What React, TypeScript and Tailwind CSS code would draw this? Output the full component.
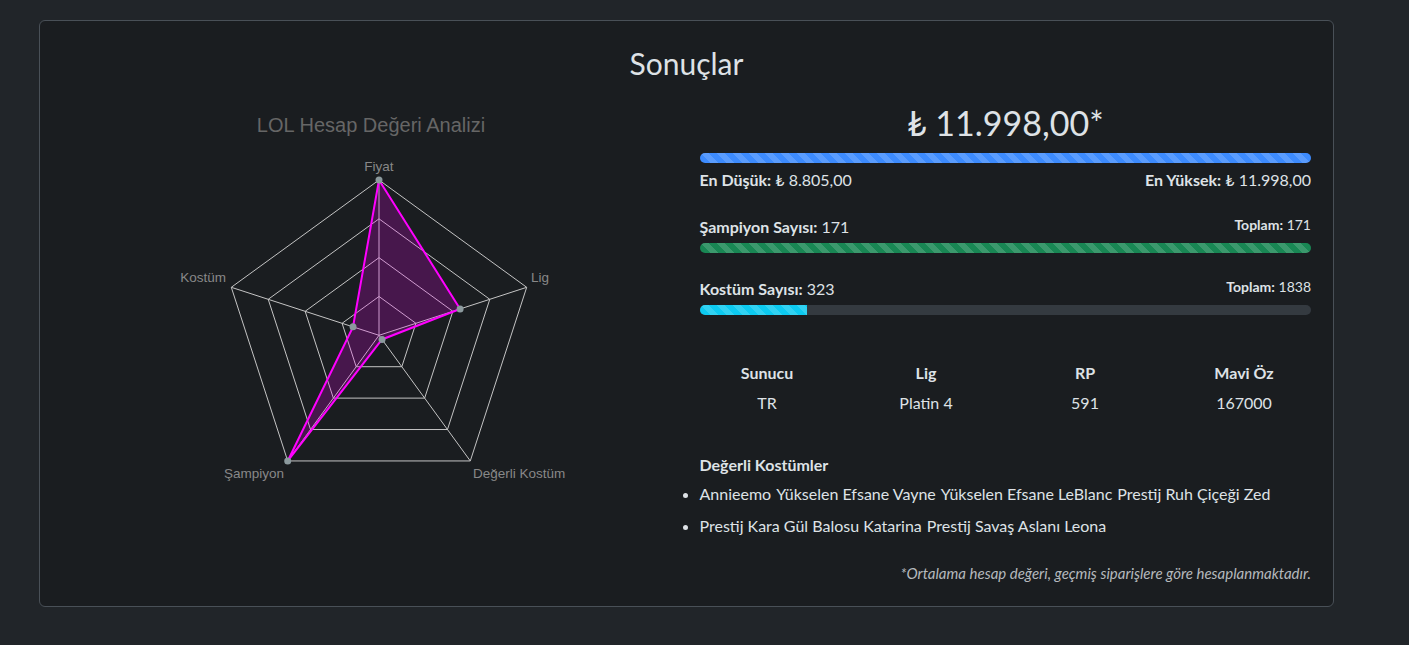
const CX = 378;
const CY = 334.3;
const R = 155.3;

const axes = [
  { label: "Fiyat", angle: -90, value: 1 },
  { label: "Lig", angle: -18, value: 0.549 },
  { label: "Değerli Kostüm", angle: 54, value: 0.033 },
  { label: "Şampiyon", angle: 126, value: 1 },
  { label: "Kostüm", angle: 198, value: 0.176 },
];

function pt(angle: number, r: number) {
  const a = (angle * Math.PI) / 180;
  return [CX + r * Math.cos(a), CY + r * Math.sin(a)];
}

function ring(r: number) {
  return axes.map((ax) => pt(ax.angle, r).join(",")).join(" ");
}

const stripes =
  "bg-[linear-gradient(45deg,rgba(255,255,255,.15)_25%,transparent_25%,transparent_50%,rgba(255,255,255,.15)_50%,rgba(255,255,255,.15)_75%,transparent_75%,transparent)] bg-[length:1rem_1rem]";

function RadarChart() {
  const data = axes.map((ax) => pt(ax.angle, ax.value * R));
  return (
    <svg width={612} height={402} viewBox="63 98 612 402" className="block">
      <text
        x={370}
        y={131}
        textAnchor="middle"
        fontFamily="'Liberation Sans', Arial, sans-serif"
        fontSize={20}
        fill="#666"
      >
        LOL Hesap Değeri Analizi
      </text>
      {[0.25, 0.5, 0.75, 1].map((f) => (
        <polygon key={f} points={ring(R * f)} fill="none" stroke="#c4c4c4" strokeWidth={1} />
      ))}
      {axes.map((ax) => {
        const [x, y] = pt(ax.angle, R);
        return <line key={ax.label} x1={CX} y1={CY} x2={x} y2={y} stroke="#c4c4c4" strokeWidth={1} />;
      })}
      <polygon
        points={data.map((p) => p.join(",")).join(" ")}
        fill="rgba(255,0,255,0.2)"
        stroke="#ff00ff"
        strokeWidth={2}
        strokeLinejoin="miter"
      />
      {data.map(([x, y], i) => (
        <circle key={i} cx={x} cy={y} r={3.5} fill="#8c9a9e" />
      ))}
      <g fontFamily="'Liberation Sans', Arial, sans-serif" fontSize={13.5} fill="#888">
        <text x={378} y={170} textAnchor="middle">Fiyat</text>
        <text x={530} y={281}>Lig</text>
        <text x={225} y={281} textAnchor="end">Kostüm</text>
        <text x={283} y={477} textAnchor="end">Şampiyon</text>
        <text x={472} y={477}>Değerli Kostüm</text>
      </g>
    </svg>
  );
}

function CountBar({
  label,
  value,
  total,
  color,
}: {
  label: string;
  value: number;
  total: number;
  color: string;
}) {
  const pct = (value / total) * 100;
  return (
    <div>
      <div className="flex items-end justify-between">
        <span className="text-[16px] leading-[24px]">
          <b className="font-bold">{label}:</b> {value}
        </span>
        <span className="mb-[4px] text-[14px] leading-[20px]">
          <b className="font-bold">Toplam:</b> {total}
        </span>
      </div>
      <div className="mt-[4px] h-[10px] w-full overflow-hidden rounded-full bg-[#343a40]">
        <div className={`h-full ${color} ${stripes}`} style={{ width: `${pct}%` }} />
      </div>
    </div>
  );
}

export default function App() {
  return (
    <div
      className="min-h-[645px] bg-[#212529] pt-[20px] text-[#dee2e6]"
      style={{ fontFamily: "Lato, 'Noto Sans', sans-serif" }}
    >
      <div className="ml-[39px] w-[1295px] rounded-md border border-[#495057] bg-[#1a1d20] px-6 pb-[22px] pt-[22px]">
        <h2 className="text-center text-[30px] leading-[40px] font-normal">Sonuçlar</h2>

        <div className="mt-[16px] flex">
          {/* chart column */}
          <div className="w-[611.5px] shrink-0">
            <RadarChart />
          </div>

          {/* results column */}
          <div className="ml-[24px] w-[611.5px] shrink-0">
            <div className="text-center text-[34px] leading-[48px]">₺ 11.998,00*</div>
            <div className="mt-[6px] h-[10px] w-full overflow-hidden rounded-full bg-[#343a40]">
              <div className={`h-full w-full bg-[#3d8bfd] ${stripes}`} />
            </div>
            <div className="mt-[5px] flex justify-between text-[16px] leading-[24px]">
              <span>
                <b className="font-bold">En Düşük:</b> ₺ 8.805,00
              </span>
              <span>
                <b className="font-bold">En Yüksek:</b> ₺ 11.998,00
              </span>
            </div>

            <div className="mt-[23px]">
              <CountBar label="Şampiyon Sayısı" value={171} total={171} color="bg-[#198754]" />
            </div>
            <div className="mt-[24px]">
              <CountBar label="Kostüm Sayısı" value={323} total={1838} color="bg-[#0dcaf0]" />
            </div>

            <div className="ml-[-12px] mt-[46px] grid grid-cols-[159px_159px_159px_159px] text-center text-[16px] leading-[24px]">
              <div className="font-bold">Sunucu</div>
              <div className="font-bold">Lig</div>
              <div className="font-bold">RP</div>
              <div className="font-bold">Mavi Öz</div>
              <div className="mt-[6px]">TR</div>
              <div className="mt-[6px]">Platin 4</div>
              <div className="mt-[6px]">591</div>
              <div className="mt-[6px]">167000</div>
            </div>

            <div className="mt-[38px] text-[16px] font-bold leading-[24px]">Değerli Kostümler</div>
            <ul className="ml-[-16px] mt-[5px] list-disc pl-[16px] text-[16px] marker:text-[#dee2e6]">
              <li className="leading-[24px]">
                <span className="flex gap-[5px]">
                  <span>Annieemo</span>
                  <span>Yükselen Efsane Vayne</span>
                  <span>Yükselen Efsane LeBlanc</span>
                  <span>Prestij Ruh Çiçeği Zed</span>
                </span>
              </li>
              <li className="mt-[8px] leading-[24px]">
                <span className="flex gap-[5px]">
                  <span>Prestij Kara Gül Balosu Katarina</span>
                  <span>Prestij Savaş Aslanı Leona</span>
                </span>
              </li>
            </ul>

            <div className="mt-[24px] text-right text-[15px] italic leading-[22px] text-[#b5b9bd]">
              *Ortalama hesap değeri, geçmiş siparişlere göre hesaplanmaktadır.
            </div>
          </div>
        </div>
      </div>
    </div>
  );
}
